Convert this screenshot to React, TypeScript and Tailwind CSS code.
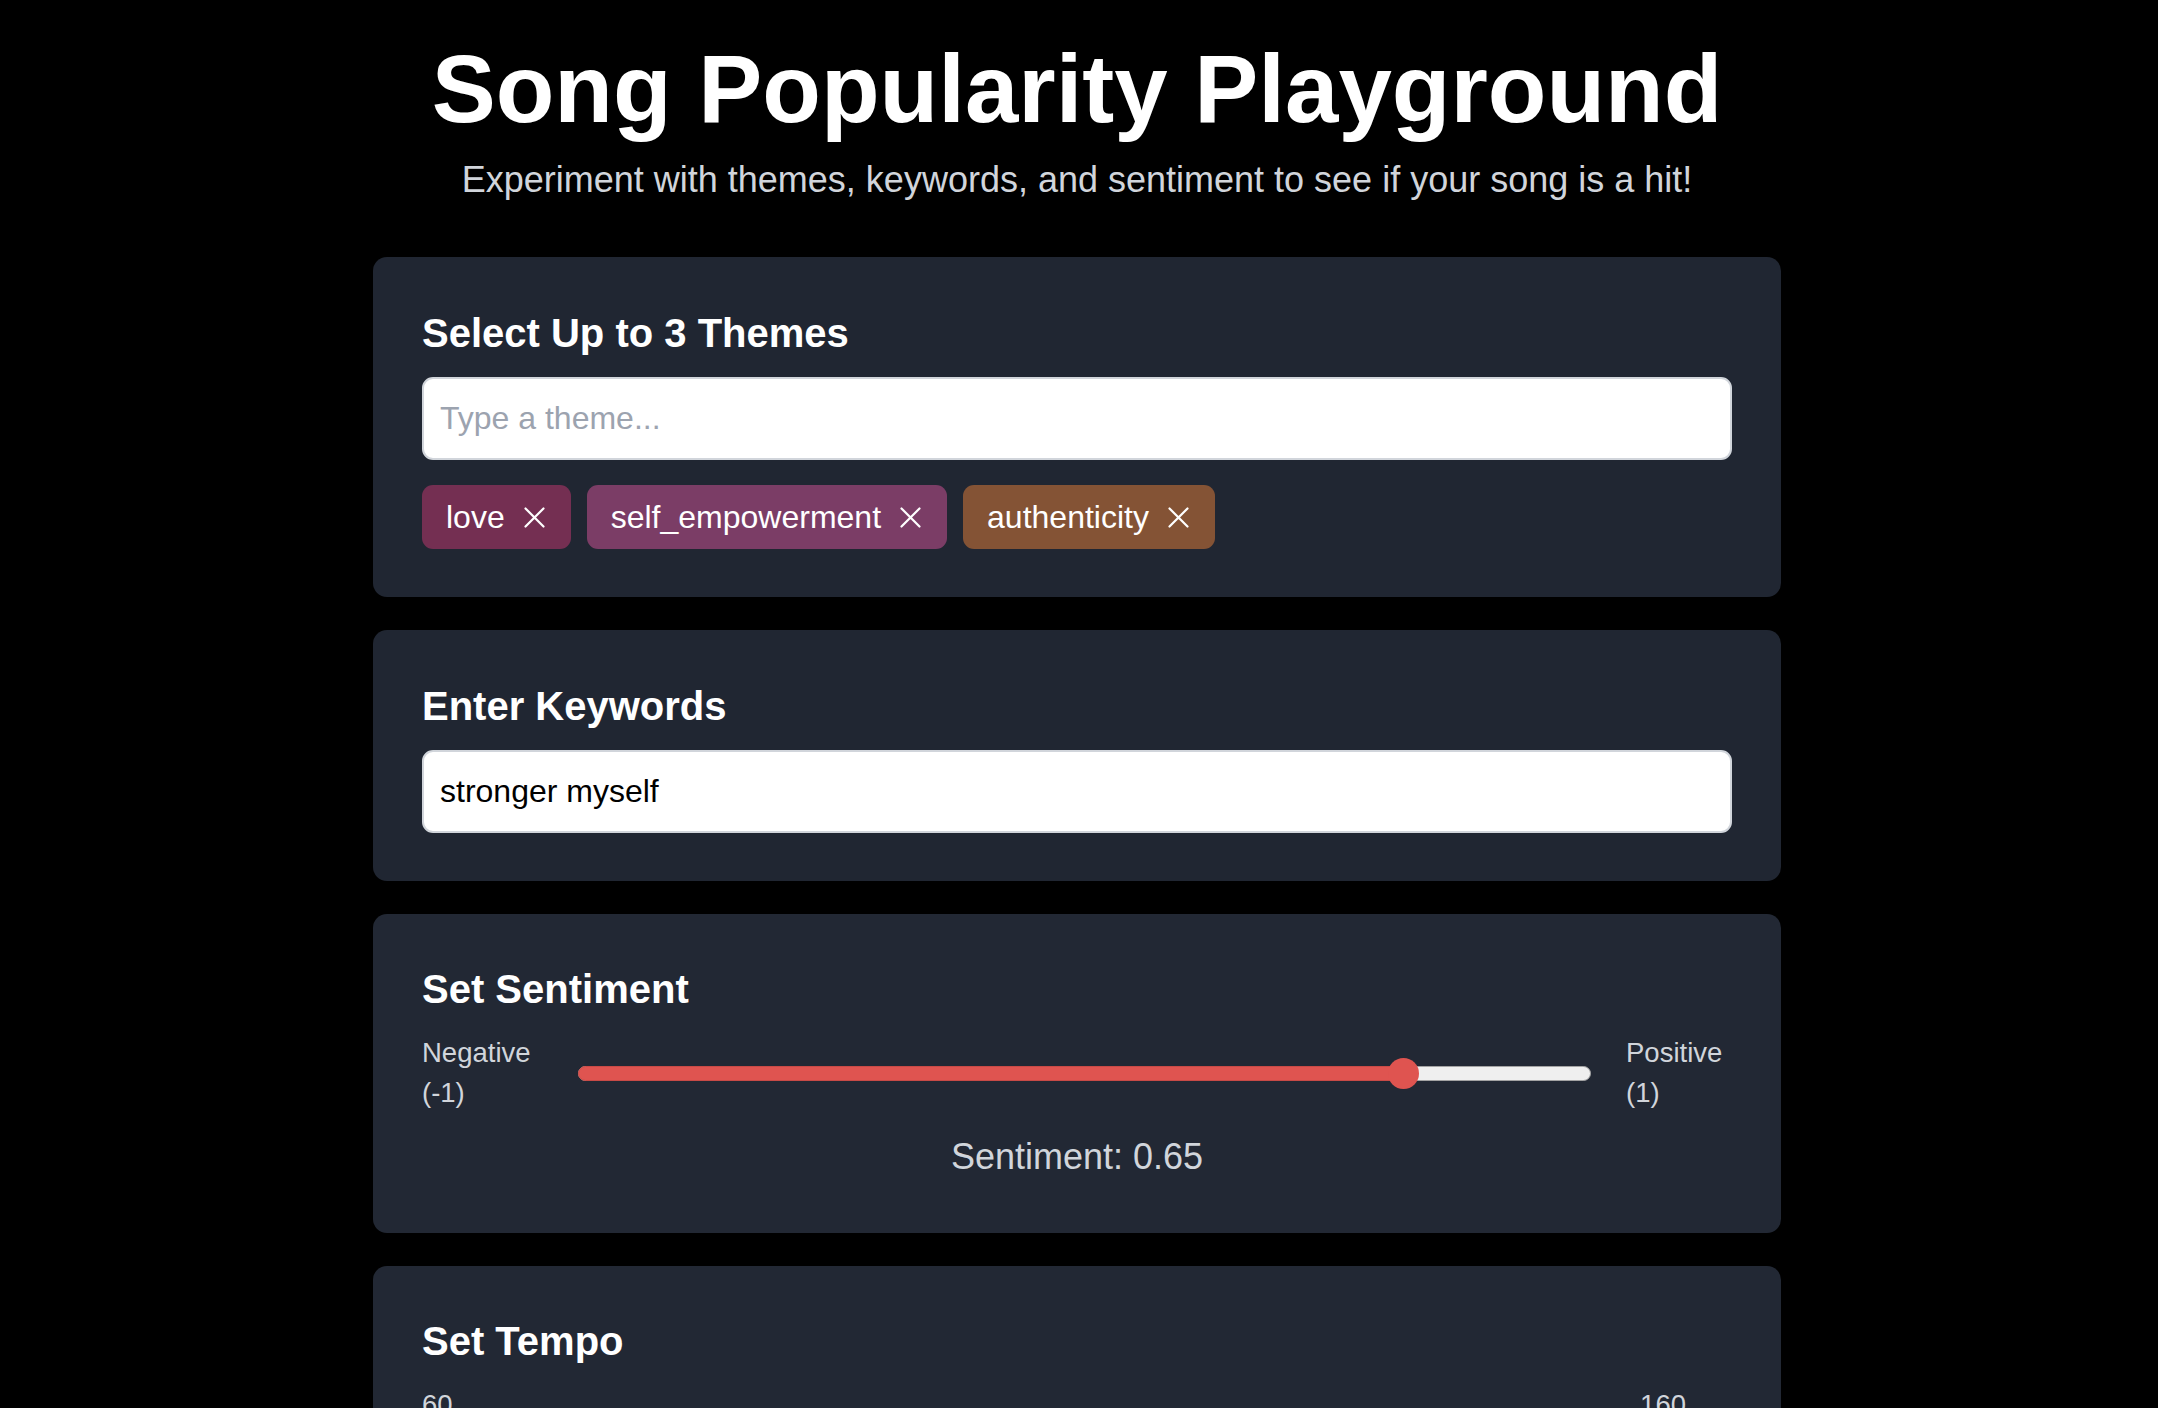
import React, { useState } from "react";

const themeColors: Record<string, string> = {
  love: "bg-[#742f52]",
  self_empowerment: "bg-[#7b3d66]",
  authenticity: "bg-[#845335]",
};

const XIcon = () => (
  <svg width="21" height="21" viewBox="0 0 21 21" fill="none">
    <path
      d="M1.5 1.5L19.5 19.5M19.5 1.5L1.5 19.5"
      stroke="white"
      strokeWidth="2.2"
      strokeLinecap="round"
    />
  </svg>
);

const Slider = ({ ratio }: { ratio: number }) => {
  return (
    <div className="relative flex h-[31px] flex-1 items-center">
      <div className="relative h-[15px] w-full rounded-full border border-[#a3a3a3] bg-[#efefef]">
        <div
          className="absolute top-[-1px] bottom-[-1px] left-[-1px] rounded-l-full border border-[#c94a46] bg-[#df5450]"
          style={{ width: `calc(${ratio * 100}% + 2px)` }}
        />
      </div>
      <div
        className="absolute top-0 h-[31px] w-[31px] rounded-full bg-[#df5450]"
        style={{ left: `calc(${ratio} * (100% - 31px))` }}
      />
    </div>
  );
};

export default function App() {
  const [themes, setThemes] = useState(["love", "self_empowerment", "authenticity"]);
  const [keywords, setKeywords] = useState("stronger myself");
  const sentiment = 0.65;
  const tempo = 120;

  return (
    <div className="min-h-screen bg-black pr-[4px] font-['Liberation_Sans',Arial,sans-serif]">
      <div className="mx-auto w-[1408px] pt-[41px] pb-12">
        <h1 className="text-center text-[96px] leading-none font-bold text-white">
          Song Popularity Playground
        </h1>
        <p className="mt-[16px] text-center text-[36px] leading-[54px] text-[#d1d5db]">
          Experiment with themes, keywords, and sentiment to see if your song is a hit!
        </p>

        <div className="mt-[50px] flex flex-col gap-[33px]">
          {/* themes */}
          <div className="rounded-[14px] bg-[#202632] px-[49px] pt-[50px] pb-[48px]">
            <h2 className="text-[40px] leading-[53px] font-bold text-white">
              Select Up to 3 Themes
            </h2>
            <input
              className="mt-[17px] h-[83px] w-full rounded-[11px] border-2 border-[#d1d5db] bg-white px-[16px] text-[32px] text-black outline-none placeholder:text-[#9ca3af]"
              placeholder="Type a theme..."
            />
            <div className="mt-[25px] flex gap-[16px]">
              {themes.map((t) => (
                <div
                  key={t}
                  className={`flex h-[64px] items-center gap-[19px] rounded-[11px] pr-[26px] pl-[24px] text-[32px] text-white ${themeColors[t]}`}
                >
                  <span>{t}</span>
                  <button onClick={() => setThemes(themes.filter((x) => x !== t))}>
                    <XIcon />
                  </button>
                </div>
              ))}
            </div>
          </div>

          {/* keywords */}
          <div className="rounded-[14px] bg-[#202632] px-[49px] pt-[50px] pb-[48px]">
            <h2 className="text-[40px] leading-[53px] font-bold text-white">Enter Keywords</h2>
            <input
              className="mt-[17px] h-[83px] w-full rounded-[11px] border-2 border-[#d1d5db] bg-white px-[16px] text-[32px] text-black outline-none"
              value={keywords}
              onChange={(e) => setKeywords(e.target.value)}
            />
          </div>

          {/* sentiment */}
          <div className="rounded-[14px] bg-[#222834] px-[49px] pt-[49px] pb-[49px]">
            <h2 className="text-[40px] leading-[53px] font-bold text-white">Set Sentiment</h2>
            <div className="mt-[17px] flex items-center">
              <div className="w-[108px] text-[27.5px] leading-[40px] text-[#d1d5db]">
                <div>Negative</div>
                <div>(-1)</div>
              </div>
              <div className="ml-[48px] flex flex-1">
                <Slider ratio={(sentiment + 1) / 2} />
              </div>
              <div className="ml-[35px] w-[106px] text-[27.5px] leading-[40px] text-[#d1d5db]">
                <div>Positive</div>
                <div>(1)</div>
              </div>
            </div>
            <p className="mt-[17px] text-center text-[36px] leading-[54px] text-[#d1d5db]">
              Sentiment: {sentiment.toFixed(2)}
            </p>
          </div>

          {/* tempo */}
          <div className="rounded-[14px] bg-[#222834] px-[49px] pt-[49px] pb-[49px]">
            <h2 className="text-[40px] leading-[53px] font-bold text-white">Set Tempo</h2>
            <div className="mt-[17px] flex justify-between text-[27.5px] leading-[40px] text-[#d1d5db]">
              <span>60</span>
              <span className="mr-[46px]">160</span>
            </div>
            <div className="mt-[12px] flex">
              <Slider ratio={(tempo - 60) / 100} />
            </div>
            <p className="mt-[17px] text-center text-[36px] leading-[54px] text-[#d1d5db]">
              Tempo: {tempo} BPM
            </p>
          </div>
        </div>
      </div>
    </div>
  );
}
